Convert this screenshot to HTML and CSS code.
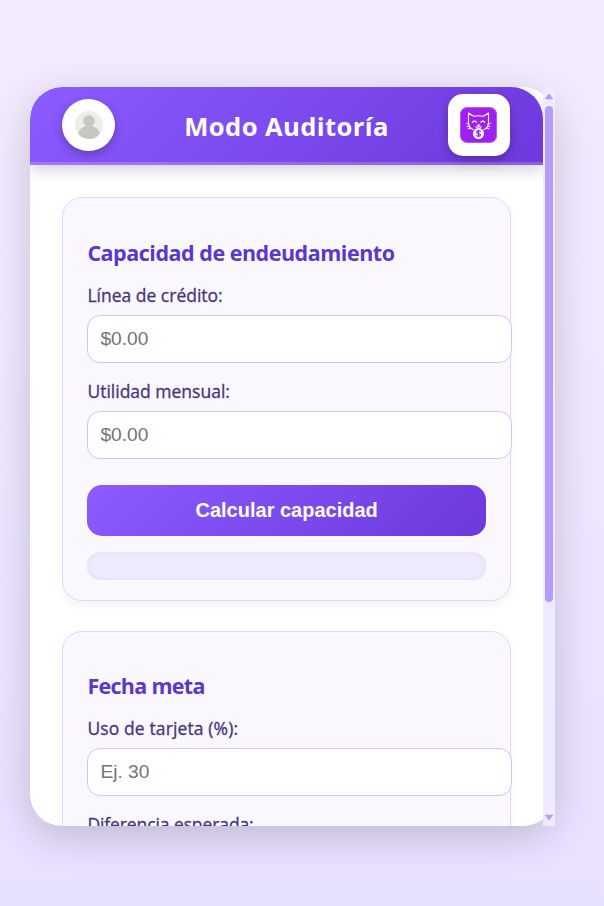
FILE: index.html
```html
<!DOCTYPE html>
<html lang="es">
<head>
<meta charset="utf-8">
<title>Modo Auditoría</title>
<link rel="stylesheet" href="styles.css">
</head>
<body>
<main class="phone">
  <div class="content">
    <header class="header">
      <div class="avatar">
        <svg width="28" height="28" viewBox="0 0 28 28">
          <clipPath id="face"><circle cx="14" cy="14" r="14"/></clipPath>
          <g clip-path="url(#face)">
            <rect width="28" height="28" fill="#efede8"/>
            <ellipse cx="14" cy="25" rx="11" ry="10.5" fill="#c8c6c0"/>
            <circle cx="14" cy="10" r="5.8" fill="#c8c6c0"/>
          </g>
        </svg>
      </div>
      <h1 class="title">Modo Auditoría</h1>
      <div class="logo">
        <svg width="37" height="36" viewBox="0 0 37 36">
          <rect x=".5" y=".5" width="36" height="35" rx="6.5" fill="#a020f0" stroke="#b958f5"/>
          <g fill="none" stroke="#fff" stroke-width="1.1" stroke-linecap="round" stroke-linejoin="round">
            <path d="M13 22.500Q8.500 20.500 8.500 16L8.500 6L13.500 9.300Q18.500 8.300 23.500 9.300L28.500 6L28.500 16Q28.500 20.500 24 22.500"/>
            <path d="M12.300 15.300Q14.300 13 16.500 15.300M20.800 15.300Q22.800 13 24.800 15.300M17.500 18H19.800M18.600 18V19.300Q17.500 20.800 16 19.800M18.600 19.300Q19.800 20.800 21.200 19.800"/>
            <path d="M9.500 17.800L6.700 16.300M10 19.800L7 19.300M11 21.300L8 21.800M27.500 17.800L30.500 16.300M27 19.800L30 19.300M26 21.300L29 21.800" stroke-width=".9"/>
          </g>
          <circle cx="18.500" cy="26.500" r="5.500" fill="#fff"/>
          <path d="M20.700 24.400Q18.500 23 17 24.200Q15.900 26 18.500 26.500Q21.300 27.200 20 28.700Q18.300 29.700 16.300 28.500M18.500 22.700V30.300" fill="none" stroke="#a020f0" stroke-width="1.200"/>
        </svg>
      </div>
    </header>
    <section class="card">
      <h2 class="heading heading-capacity">Capacidad de endeudamiento</h2>
      <label class="label" for="credit">Línea de crédito:</label>
      <input class="input" id="credit" placeholder="$0.00">
      <label class="label" for="profit">Utilidad mensual:</label>
      <input class="input" id="profit" placeholder="$0.00">
      <button class="button">Calcular capacidad</button>
      <div class="result"></div>
    </section>
    <section class="card">
      <h2 class="heading heading-goal">Fecha meta</h2>
      <label class="label label-usage" for="usage">Uso de tarjeta (%):</label>
      <input class="input" id="usage" placeholder="Ej. 30">
      <label class="label label-diff" for="diff">Diferencia esperada:</label>
      <input class="input" id="diff">
    </section>
  </div>
  <div class="scrollbar">
    <svg class="arrow" width="10" height="7" viewBox="0 0 10 7"><path d="M5 1L8.600 5.800H1.400Z" fill="#b49cff" stroke="#b49cff" stroke-linejoin="round"/></svg>
    <div class="thumb"></div>
    <svg class="arrow arrow-down" width="10" height="7" viewBox="0 0 10 7"><path d="M5 6L8.600 1.200H1.400Z" fill="#b49cff" stroke="#b49cff" stroke-linejoin="round"/></svg>
  </div>
</main>
</body>
</html>
```
FILE: styles.css
```css
* { box-sizing: border-box; }
body {
  margin: 0;
  height: 906px;
  padding: 87px 0 0 30.4px;
  overflow: hidden;
  background: linear-gradient(180deg, #f3ecff, #e8e0ff);
  font-family: "Open Sans", "Noto Sans", sans-serif;
}
.phone {
  display: flex;
  width: 525px;
  height: 739px;
  border-radius: 32px;
  background: #fff;
  box-shadow: 0 10px 38px rgba(0, 0, 0, .18);
}
.content {
  flex: 1;
  min-width: 0;
  overflow: hidden;
  border-radius: 32px 0 0 32px;
}
.header {
  display: flex;
  align-items: center;
  justify-content: space-between;
  height: 78px;
  padding: 0 33px 0 32px;
  border-bottom: 3px solid rgba(255, 255, 255, .2);
  border-radius: 32px 32px 0 0;
  background: linear-gradient(135deg, #8b5cff, #6d38dc) border-box;
  box-shadow: 0 5px 15px rgba(0, 0, 0, .18);
}
.avatar, .logo {
  display: flex;
  align-items: center;
  justify-content: center;
  background: #fff;
  box-shadow: 0 4px 10px rgba(0, 0, 0, .25);
}
.avatar { width: 53px; height: 52px; border-radius: 50%; }
.logo { width: 62px; height: 62px; border-radius: 15px; }
.title {
  margin: 4px 0 0 10px;
  color: #fff;
  font-size: 25.6px;
  line-height: 36px;
  font-weight: 700;
  letter-spacing: .4px;
  white-space: nowrap;
}
.card {
  width: 448.5px;
  height: 404px;
  margin: 32px 0 0 32px;
  padding: 39px 24px 0;
  border: 1px solid #e0d8ff;
  border-radius: 20px;
  background: #faf7ff;
  box-shadow: 0 4px 10px rgba(0, 0, 0, .05);
}
.card + .card {
  margin-top: 30px;
  padding-top: 38px;
}
.heading {
  margin: 0 0 14px;
  color: #5b38c7;
  font-size: 21.5px;
  line-height: 32px;
  font-weight: 700;
  letter-spacing: -.48px;
  white-space: nowrap;
}
.heading-goal { letter-spacing: -.7px; }
.label {
  display: block;
  height: 24px;
  margin-bottom: 8px;
  color: #463579;
  font-size: 17.5px;
  line-height: 24px;
  -webkit-text-stroke: .3px #463579;
}
.label-usage { letter-spacing: .12px; }
.label-diff { letter-spacing: -.1px; }
.input {
  display: block;
  width: 424.5px;
  height: 48px;
  margin: 0 0 16px;
  padding: 0 12px 1px;
  border: 1px solid #d1c4ff;
  border-radius: 13px;
  background: #fff;
  font: 19.2px "Liberation Sans", Arial, sans-serif;
}
.input::placeholder { color: #757575; }
.button {
  display: block;
  width: 398.5px;
  height: 51px;
  margin: 26px 0 16px;
  padding: 0;
  border: 0;
  border-radius: 15px;
  color: #fff;
  background: linear-gradient(135deg, #8b5cff, #6d38dc);
  font: 700 20px "Liberation Sans", Arial, sans-serif;
}
.result {
  width: 398.5px;
  height: 28px;
  border-radius: 13px;
  background: #efeaff;
  box-shadow: inset 0 0 7px rgba(0, 0, 0, .06);
}
.scrollbar {
  display: flex;
  flex-direction: column;
  align-items: center;
  width: 12.5px;
  padding: 6px 0 5px;
  background: #efeaff;
}
.arrow { display: block; }
.thumb {
  width: 8px;
  height: 496px;
  margin-top: 6px;
  border-radius: 4px;
  background: #b49cff;
}
.arrow-down { margin-top: auto; }
```
